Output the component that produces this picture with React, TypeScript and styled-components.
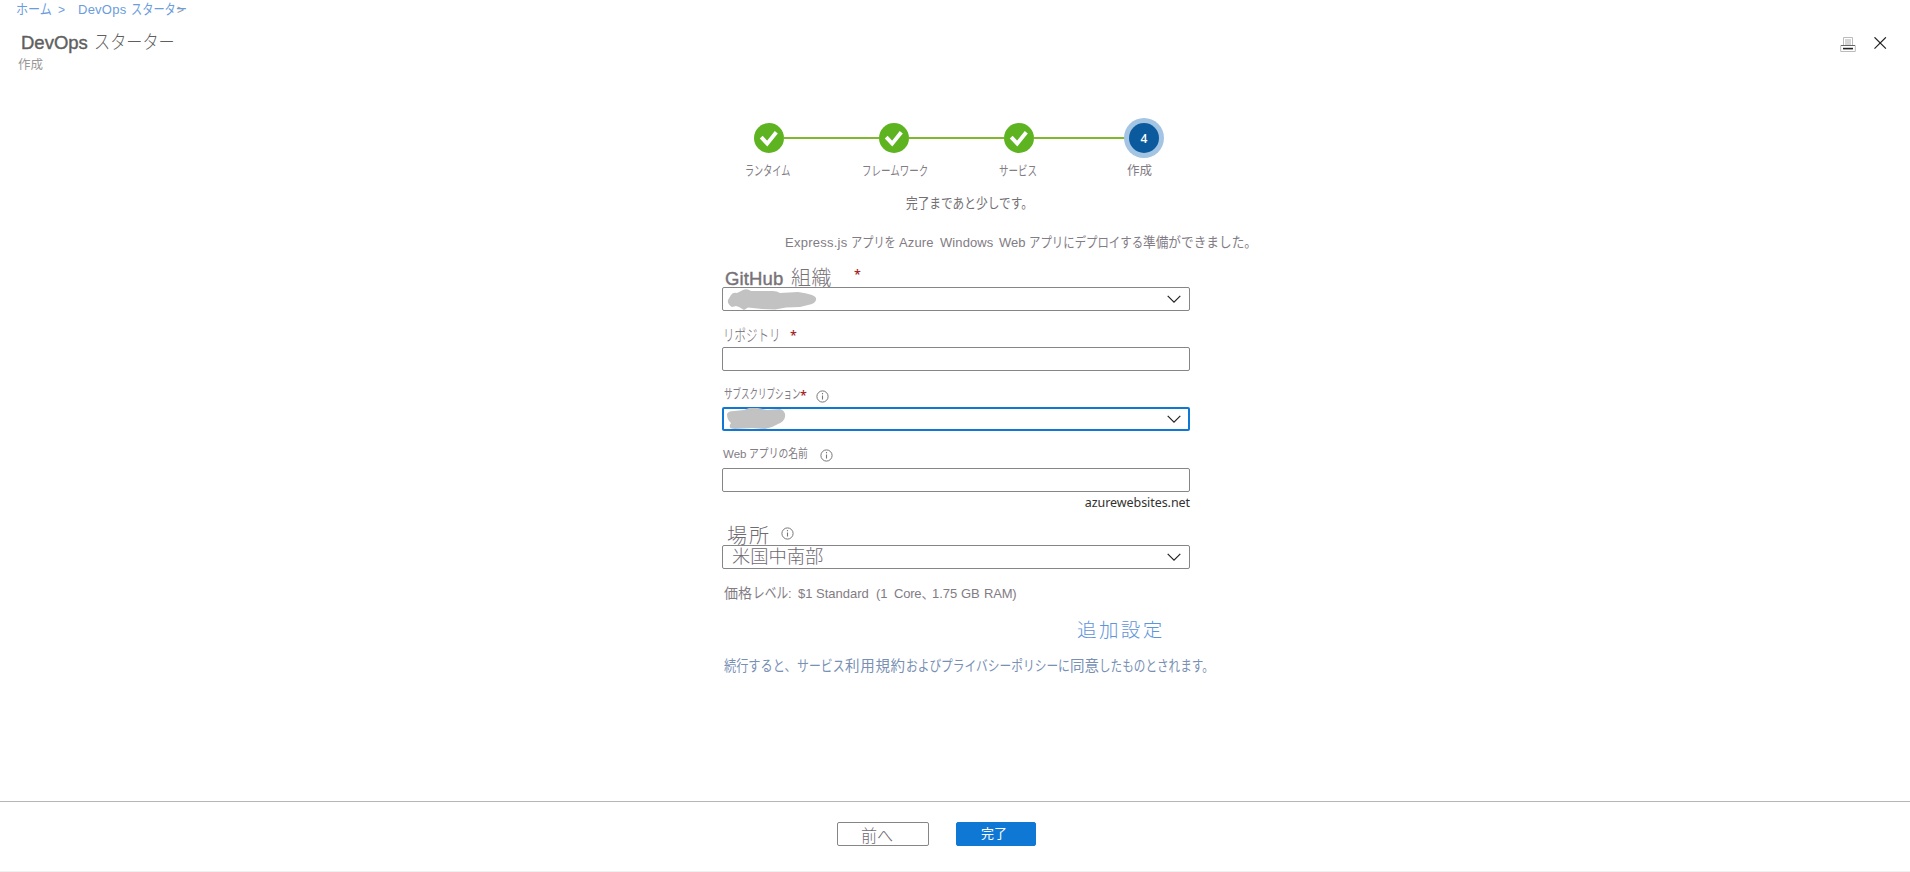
import React from 'react';
import styled, { createGlobalStyle, css } from 'styled-components';

const GlobalStyle = createGlobalStyle`
  * { box-sizing: border-box; }
  html, body { margin: 0; padding: 0; background: #fff; overflow: hidden; }
  body { font-family: "Liberation Sans", "Noto Sans CJK JP", sans-serif; color: #827c84; }
`;

const Page = styled.div`
  display: flex;
  flex-direction: column;
  width: 1910px;
  height: 872px;
  background: #fff;
  border-bottom: 1px solid #f0f0f0;
`;

/* A line of text runs; each run keeps its own measure. */
const TextRow = styled.div<{ $h: number; $indent?: number; $color?: string }>`
  display: flex;
  align-items: baseline;
  flex: none;
  height: ${p => p.$h}px;
  line-height: ${p => p.$h}px;
  padding-left: ${p => p.$indent ?? 0}px;
  color: ${p => p.$color ?? 'inherit'};
  white-space: nowrap;
`;

const Run = styled.span<{
  $w: number; $size: number; $gap?: number; $track?: number; $squeeze?: number; $heavy?: boolean; $color?: string;
}>`
  display: block;
  flex: none;
  width: ${p => p.$w}px;
  margin-left: ${p => p.$gap ?? 0}px;
  font-size: ${p => p.$size}px;
  font-weight: ${p => (p.$size < 16 ? 400 : 300)};
  letter-spacing: ${p => p.$track ?? 0}px;
  ${p => p.$color && css`color: ${p.$color};`}
  ${p => p.$squeeze && css`transform: scaleX(${p.$squeeze}); transform-origin: left center;`}
  ${p => p.$heavy && css`-webkit-text-stroke: 0.4px currentColor;`}
`;

/* The blade's subtitle, tucked close under its title. */
const Subtitle = styled.div`
  height: 18px;
  margin-top: -11px;
  padding-left: 18px;
  font-size: 12.5px;
  line-height: 18px;
  color: #999;
`;

const Header = styled.header`
  display: flex;
  justify-content: space-between;
  height: 118px;
  flex: none;
`;
const HeaderTools = styled.div`
  display: flex;
  gap: 18px;
  padding: 37px 23px 0 0;
`;

const Wizard = styled.main`
  display: flex;
  flex-direction: column;
  flex: 1;
  padding-left: 722px;
`;
const Steps = styled.div`
  display: flex;
  align-items: center;
  flex: none;
  width: 437px;
  height: 40px;
  padding-left: 32px;
`;
const Disc = styled.div<{ $current?: boolean }>`
  display: flex;
  align-items: center;
  justify-content: center;
  flex: none;
  width: 30px;
  height: 30px;
  border-radius: 50%;
  background: ${p => (p.$current ? '#0b5a9d' : '#5db320')};
  box-shadow: ${p => (p.$current ? '0 0 0 5px #a3c4e3' : 'none')};
  color: #fff;
  font: 600 12px "Open Sans", sans-serif;
`;
const Connector = styled.div`
  flex: 1;
  height: 2px;
  background: #80b82c;
`;

const Field = styled.div<{ $focused?: boolean; $below: number }>`
  display: flex;
  align-items: center;
  justify-content: space-between;
  flex: none;
  width: 468px;
  height: 24px;
  margin-bottom: ${p => p.$below}px;
  padding-right: ${p => (p.$focused ? 7 : 8)}px;
  border: ${p => (p.$focused ? '2px solid #0f78d4' : '1px solid #868686')};
  border-radius: 2px;
  background: #fff;
`;
const LabelRow = styled.div<{ $h: number }>`
  display: flex;
  flex: none;
  height: ${p => p.$h}px;
`;
const Star = styled.span<{ $gap: number; $top: number }>`
  flex: none;
  height: 14px;
  width: 7px;
  margin: ${p => p.$top}px 0 0 ${p => p.$gap}px;
  font: 600 12.5px/14px "Open Sans", sans-serif;
  color: #a4262c;
`;
const InfoSvg = styled.svg<{ $gap: number; $top: number }>`
  flex: none;
  margin: ${p => p.$top}px 0 0 ${p => p.$gap}px;
`;
const Redaction = styled.svg<{ $left: number }>`
  flex: none;
  overflow: visible;
  margin-left: ${p => p.$left}px;
`;
const Chevron = styled.svg`
  margin-left: auto;
  flex: none;
`;
const Suffix = styled.div`
  flex: none;
  width: 468px;
  height: 22px;
  text-align: right;
  font: 12.5px/22px "Noto Sans", sans-serif;
  letter-spacing: -0.06px;
  color: #323130;
`;

const Footer = styled.footer`
  display: flex;
  flex: none;
  gap: 27px;
  height: 70px;
  padding: 20px 0 0 837px;
  border-top: 1px solid #b5b5b5;
`;
const Button = styled.button<{ $primary?: boolean }>`
  display: flex;
  width: ${p => (p.$primary ? 80 : 92)}px;
  height: 24px;
  padding: 0 0 0 ${p => (p.$primary ? 24 : 23)}px;
  border: 1px solid ${p => (p.$primary ? '#0f78d4' : '#868686')};
  border-radius: 2px;
  background: ${p => (p.$primary ? '#0f78d4' : '#fff')};
  color: ${p => (p.$primary ? '#fff' : '#6f6971')};
  font-family: inherit;
`;

const Check = () => (
  <svg width="30" height="30" viewBox="0 0 30 30" fill="none">
    <path d="M7.2 14.2 13.2 20.6 22.3 9.2" stroke="#fff" strokeWidth="3.9" />
  </svg>
);
const Info = ({ gap, top }: { gap: number; top: number }) => (
  <InfoSvg $gap={gap} $top={top} width="13" height="13" viewBox="0 0 13 13">
    <circle cx="6.5" cy="6.5" r="5.6" fill="none" stroke="#777" strokeWidth="1" />
    <path d="M6.5 5.5v4M6.5 3v1.3" stroke="#777" strokeWidth="1.1" />
  </InfoSvg>
);
const Down = () => (
  <Chevron width="14" height="8" viewBox="0 0 14 8" fill="none">
    <path d="M.7.8 7 7.1 13.3.8" stroke="#222" strokeWidth="1.2" />
  </Chevron>
);

export default function App() {
  return (
    <Page>
      <GlobalStyle />
      <Header>
        <div>
          <TextRow $h={18} $indent={16} $color="#6a9ddd">
            <Run $w={35} $size={14} $squeeze={0.86}>ホーム</Run>
            <Run $w={7} $gap={7} $size={12}>&gt;</Run>
            <Run $w={49} $gap={13} $size={13} $track={0.25}>DevOps</Run>
            <Run $w={46} $gap={4} $size={14} $squeeze={0.8}>スターター</Run>
            <Run $w={8} $size={12} $color="#999">&gt;</Run>
          </TextRow>
          <TextRow $h={49} $indent={21} $color="#5f5f5f">
            <Run $w={68} $size={18.5} $heavy>DevOps</Run>
            <Run $w={80} $gap={5} $size={19} $squeeze={0.85}>スターター</Run>
          </TextRow>
          <Subtitle>作成</Subtitle>
        </div>
        <HeaderTools>
          <svg width="16" height="16" viewBox="0 0 16 16" fill="none">
            <path d="M3.5 8V.5h9V8" fill="#fff" stroke="#bbb" />
            <path d="M5 3h6M5 5h6M5 7h6" stroke="#999" strokeWidth=".8" />
            <path d="M.7 8.5h14.6v6H.7z" fill="#fff" stroke="#bbb" />
            <path d="M1 8.5h14" stroke="#666" />
            <path d="M3 11.6h10" stroke="#222" strokeWidth="1.6" />
          </svg>
          <svg width="13" height="13" viewBox="0 0 13 13" fill="none">
            <path d="M.5.3 11.9 11.7M11.9.3.5 11.7" stroke="#222" strokeWidth="1.2" />
          </svg>
        </HeaderTools>
      </Header>

      <Wizard>
        <Steps>
          <Disc><Check /></Disc><Connector />
          <Disc><Check /></Disc><Connector />
          <Disc><Check /></Disc><Connector />
          <Disc $current>4</Disc>
        </Steps>
        <TextRow $h={26} $indent={23}>
          <Run $w={45} $size={13} $squeeze={0.7}>ランタイム</Run>
          <Run $w={66} $gap={72} $size={13} $squeeze={0.73}>フレームワーク</Run>
          <Run $w={38} $gap={71} $size={13} $squeeze={0.73}>サービス</Run>
          <Run $w={26} $gap={90} $size={12.5}>作成</Run>
        </TextRow>
        <TextRow $h={40} $indent={184} $color="#736f73">
          <Run $w={126} $size={13.5} $squeeze={0.865}>完了まであと少しです。</Run>
        </TextRow>
        <TextRow $h={36} $indent={63}>
          <Run $w={62} $size={13} $track={0.25}>Express.js</Run>
          <Run $w={43} $gap={4} $size={14} $squeeze={0.8}>アプリを</Run>
          <Run $w={34} $gap={5} $size={13} $track={0.15}>Azure</Run>
          <Run $w={53} $gap={7} $size={13} $track={0.1}>Windows</Run>
          <Run $w={27} $gap={6} $size={13}>Web</Run>
          <Run $w={112} $gap={3} $size={14} $squeeze={0.815}>アプリにデプロイする</Run>
          <Run $w={113} $gap={2} $size={14} $squeeze={0.905}>準備ができました。</Run>
        </TextRow>

        <LabelRow $h={27}>
          <TextRow $h={36} $indent={3} $color="#777178">
            <Run $w={58} $size={18.5} $track={0.15} $heavy>GitHub</Run>
            <Run $w={43} $gap={8} $size={20} $track={0.5}>組織</Run>
          </TextRow>
          <Star $gap={20} $top={8}>*</Star>
        </LabelRow>
        <Field $below={14}>
          <Redaction $left={5} width="88" height="21" viewBox="0 0 88 21">
            <path d="M0 11 3 6Q5 3 9 4L15 1Q19-1 23 2L45 2Q49 2 52 4L70 3Q78 4 84 6 89 8 88 11 87 15 80 16L72 18 58 18.500 47 20.500 34 20 20 18.500 16 21 11 18 8 17 4 18Q-1 15 0 11Z" fill="#c2c2c2" />
          </Redaction>
          <Down />
        </Field>
        <LabelRow $h={22}>
          <TextRow $h={21} $indent={1} $color="#6f6971">
            <Run $w={57} $size={16} $squeeze={0.72}>リポジトリ</Run>
          </TextRow>
          <Star $gap={10} $top={4}>*</Star>
        </LabelRow>
        <Field $below={10} />
        <LabelRow $h={26}>
          <TextRow $h={26} $indent={2}>
            <Run $w={76} $size={13} $squeeze={0.655}>サブスクリプション</Run>
          </TextRow>
          <Star $gap={0} $top={8}>*</Star>
          <Info gap={9} top={9} />
        </LabelRow>
        <Field $focused $below={10}>
          <Redaction $left={3} width="58" height="20" viewBox="0 0 58 20">
            <path d="M0 5Q1 2 7 2L17 1 22-1 31-1 40 1 53 0Q59 2 58 8 57 13 51 15L45 18 38 20 25 19 8 20Q0 20 4 14 0 11 0 5Z" fill="#c2c2c2" />
          </Redaction>
          <Down />
        </Field>
        <LabelRow $h={27}>
          <TextRow $h={27} $indent={1}>
            <Run $w={24} $size={11.5}>Web</Run>
            <Run $w={59} $gap={2} $size={12.5} $squeeze={0.785}>アプリの名前</Run>
          </TextRow>
          <Info gap={12} top={8} />
        </LabelRow>
        <Field $below={0} />
        <Suffix>azurewebsites.net</Suffix>
        <LabelRow $h={31}>
          <TextRow $h={44} $indent={5} $color="#6f6971">
            <Run $w={44} $size={20} $track={2}>場所</Run>
          </TextRow>
          <Info gap={10} top={13} />
        </LabelRow>
        <Field $below={10}>
          <TextRow $h={24} $indent={9} $color="#6f6971">
            <Run $w={94} $size={18.3}>米国中南部</Run>
          </TextRow>
          <Down />
        </Field>
        <TextRow $h={27} $indent={2}>
          <Run $w={29} $size={14}>価格</Run>
          <Run $w={35} $size={15} $squeeze={0.78}>レベル</Run>
          <Run $w={5} $size={13}>:</Run>
          <Run $w={15} $gap={5} $size={13}>$1</Run>
          <Run $w={52} $gap={3} $size={13}>Standard</Run>
          <Run $w={12} $gap={8} $size={13}>(1</Run>
          <Run $w={36} $gap={6} $size={13} $track={-0.2}>Core、</Run>
          <Run $w={26} $gap={2} $size={13}>1.75</Run>
          <Run $w={20} $gap={3} $size={13}>GB</Run>
          <Run $w={36} $gap={3} $size={13} $track={-0.2}>RAM)</Run>
        </TextRow>
        <TextRow $h={48} $indent={355} $color="#5d94da">
          <Run $w={90} $size={19.5} $track={2.4}>追加設定</Run>
        </TextRow>
        <TextRow $h={24} $indent={2} $color="#7890b4">
          <Run $w={73} $size={14.5} $squeeze={0.84}>続行すると、</Run>
          <Run $w={48} $size={14.5} $squeeze={0.82}>サービス</Run>
          <Run $w={61} $size={14.5} $track={0.7}>利用規約</Run>
          <Run $w={35} $size={14.5} $squeeze={0.81}>および</Run>
          <Run $w={117} $size={14.5} $squeeze={0.81}>プライバシーポリシー</Run>
          <Run $w={12} $size={14.5} $squeeze={0.82}>に</Run>
          <Run $w={29} $size={14.5}>同意</Run>
          <Run $w={112} $size={14.5} $squeeze={0.8}>したものとされます。</Run>
        </TextRow>
      </Wizard>

      <Footer>
        <Button>
          <TextRow $h={27}><Run $w={32} $size={17.5} $squeeze={0.92}>前へ</Run></TextRow>
        </Button>
        <Button $primary>
          <TextRow $h={22}><Run $w={26} $size={13}>完了</Run></TextRow>
        </Button>
      </Footer>
    </Page>
  );
}
